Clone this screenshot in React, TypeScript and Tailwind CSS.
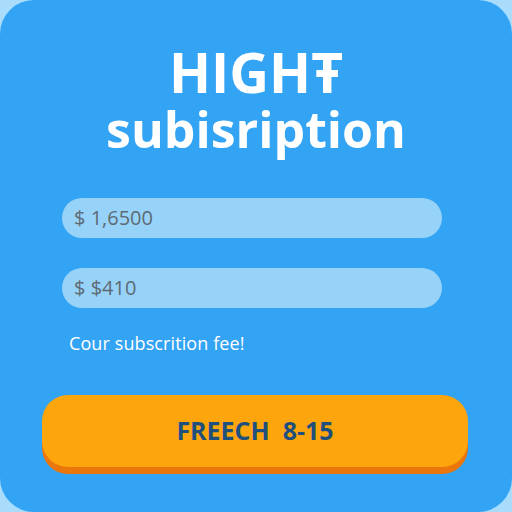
export default function App() {
  return (
    <div className="w-[512px] h-[512px] bg-[#a9dbfa] font-['Open_Sans',sans-serif]">
      <div className="flex h-full w-full flex-col rounded-[34px] bg-[#33a3f4]">
        <div className="mt-[45px] text-center font-bold text-white">
          <div className="text-[55px] leading-[54px]">HIGHŦ</div>
          <div className="mt-[5px] text-[50px] leading-[50px]">subisription</div>
        </div>

        <div className="flex flex-col pl-[62px] pr-[70px]">
          <div className="mt-[44px] flex h-[40px] items-center rounded-full bg-[#97d3f8] px-3 text-[20px] text-[#5d6a74]">
            $ 1,6500
          </div>
          <div className="mt-[30px] flex h-[40px] items-center rounded-full bg-[#97d3f8] px-3 text-[20px] text-[#5d6a74]">
            $ $410
          </div>

          <p className="mt-[22px] pl-[7px] text-[18px] leading-[27px] tracking-[0.1px] text-white">
            Cour subscrition fee!
          </p>

          <button className="ml-[-20px] mr-[-26px] mt-[38px] flex h-[72px] items-center justify-center rounded-[26px] bg-[#fca50d] text-[25px] font-bold text-[#1f4f7d] shadow-[0_7px_0_#ea760c]">
            FREECH&nbsp;&nbsp;8-15
          </button>
        </div>
      </div>
    </div>
  );
}
